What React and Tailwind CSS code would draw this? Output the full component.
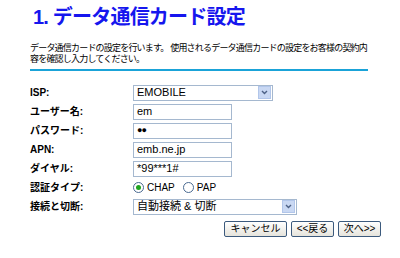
import React from 'react';

const font = { fontFamily: '"Liberation Sans", "Noto Sans CJK JP", sans-serif' };

const Label = ({ children }) => (
    <div className="w-[103px] text-[10px] font-bold text-black leading-none">{children}</div>
);

const TextBox = ({ value, w = 'w-[99px]' }) => (
    <div className={`${w} h-[16px] border border-[#a5b8cf] bg-white px-[3px] flex items-center text-[11px] text-black leading-none`}>
        {value}
    </div>
);

const SelectBox = ({ value, w }) => (
    <div className={`${w} h-[16px] border border-[#a5b8cf] bg-white pl-[3px] flex items-center justify-between text-[11px] text-black leading-none`}>
        <span>{value}</span>
        <span className="w-[13px] h-[13px] mr-[1px] bg-[#c9d8f3] border border-[#b2c6ea] flex items-center justify-center">
            <svg width="7" height="5" viewBox="0 0 7 5"><path d="M1 1 L3.5 3.5 L6 1" stroke="#4d6185" strokeWidth="1.4" fill="none" /></svg>
        </span>
    </div>
);

const Radio = ({ checked, label }) => (
    <span className="flex items-center gap-[3px]">
        <span className="w-[11px] h-[11px] rounded-full border border-[#4a6a91] bg-white flex items-center justify-center">
            {checked && <span className="w-[5px] h-[5px] rounded-full bg-[#1fa51f]" />}
        </span>
        <span className="text-[10px] leading-none">{label}</span>
    </span>
);

const Btn = ({ children, w }) => (
    <button className={`${w} h-[16px] border border-[#3c5a7d] rounded-[2px] bg-gradient-to-b from-white to-[#e6e4dc] text-[10px] leading-none text-black flex items-center justify-center`}>
        {children}
    </button>
);

const Row = ({ label, children }) => (
    <div className="h-[19px] flex items-center">
        <Label>{label}</Label>
        {children}
    </div>
);

export default function App() {
    return (
        <div className="w-[400px] h-[258px] bg-white overflow-hidden" style={font}>
            <div className="pl-[30px] pr-[32px]">
                <h1 className="pt-[5px] pl-[3px] text-[20px] tracking-[-0.8px] font-bold text-[#1616ee] leading-[24px] whitespace-nowrap">1. データ通信カード設定</h1>
                <p className="mt-[14px] text-[9px] leading-[11px] text-black tracking-[-0.8px] whitespace-nowrap">
                    データ通信カードの設定を行います。 使用されるデータ通信カードの設定をお客様の契約内<br />
                    容を確認し入力してください。
                </p>
                <div className="mt-[4px] h-[2px] bg-[#1aa3d8]" />
                <div className="mt-[12px] flex flex-col">
                    <Row label="ISP:"><SelectBox value="EMOBILE" w="w-[140px]" /></Row>
                    <Row label="ユーザー名:"><TextBox value="em" /></Row>
                    <Row label="パスワード:"><TextBox value={<span className="text-[9px] tracking-[-1px]">●●</span>} /></Row>
                    <Row label="APN:"><TextBox value="emb.ne.jp" /></Row>
                    <Row label="ダイヤル:"><TextBox value="*99***1#" /></Row>
                    <Row label="認証タイプ:">
                        <div className="flex items-center gap-[8px]">
                            <Radio checked label="CHAP" />
                            <Radio label="PAP" />
                        </div>
                    </Row>
                    <Row label="接続と切断:"><SelectBox value="自動接続 & 切断" w="w-[164px]" /></Row>
                </div>
                <div className="mt-[5px] flex justify-end gap-[4px] -mr-[13px]">
                    <Btn w="w-[63px]">キャンセル</Btn>
                    <Btn w="w-[43px]">&lt;&lt;戻る</Btn>
                    <Btn w="w-[43px]">次へ&gt;&gt;</Btn>
                </div>
            </div>
        </div>
    );
}
